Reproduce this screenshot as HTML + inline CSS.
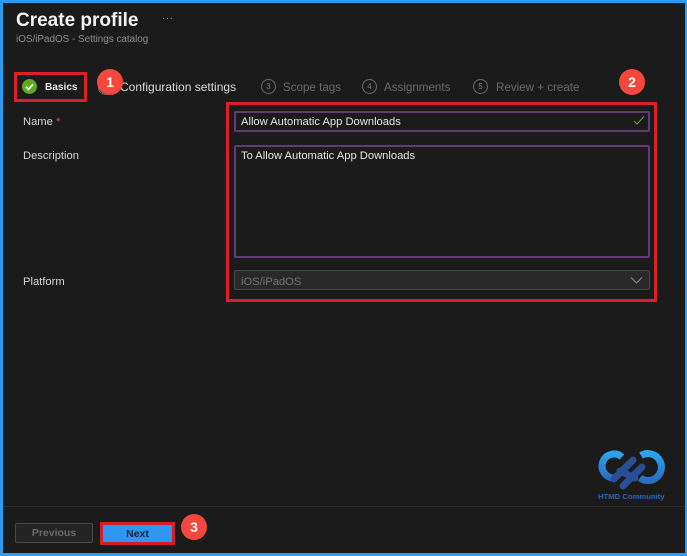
<!DOCTYPE html>
<html>
<head>
<meta charset="utf-8">
<style>
html,body{margin:0;padding:0;background:#1b1b1b}
body{width:687px;height:556px;position:relative;overflow:hidden;font-family:"Liberation Sans",sans-serif;color:#e6e6e6}
#w{position:absolute;left:0;top:0;width:687px;height:556px;filter:blur(.35px)}
.a{position:absolute;box-sizing:border-box;white-space:nowrap}
.t{font-size:11.2px;line-height:14px}
.s{font-size:11.6px;line-height:14px}
.dim{color:#696969}
.num{width:15px;height:15px;border:1px solid #6a6a6a;border-radius:50%;font-size:8px;line-height:13px;text-align:center;color:#7a7a7a}
.red{border:3px solid #dc1f29}
.inp{border:2px solid #623a76;border-radius:2px;background:#1b1b1b}
.badge{width:26px;height:26px;border-radius:50%;background:#f4483f;color:#fff;font-size:14px;font-weight:bold;line-height:26px;text-align:center}
</style>
</head>
<body>
<div id="w">
<div class="a" style="left:0;top:0;width:687px;height:556px;border:solid #2f9bf0;border-width:3px 2px 3px 3px"></div>

<div class="a" style="left:16px;top:8px;font-size:19px;line-height:26px;font-weight:bold;color:#f2f2f2">Create profile</div>
<div class="a" style="left:162px;top:12px;font-size:10px;line-height:14px;color:#9a9a9a;letter-spacing:.5px">···</div>
<div class="a" style="left:16px;top:33px;font-size:9.9px;line-height:14px;color:#8f8f8f">iOS/iPadOS - Settings catalog</div>

<div class="a red" style="left:14px;top:72px;width:73px;height:30px"></div>
<svg class="a" style="left:22px;top:79px" width="15" height="15" viewBox="0 0 15 15"><circle cx="7.5" cy="7.5" r="7.5" fill="#5fa81f"/><path d="M4 7.8l2.500 2.500L11 5.300" fill="none" stroke="#fff" stroke-width="1.800"/></svg>
<div class="a" style="left:45px;top:81px;font-size:10.1px;line-height:14px;font-weight:bold;color:#e8e8e8">Basics</div>

<div class="a num" style="left:98px;top:80px"></div>
<div class="a" style="left:120px;top:80px;font-size:12px;line-height:14px;color:#d8d8d8">Configuration settings</div>
<div class="a badge" style="left:97px;top:69px">1</div>

<div class="a num" style="left:261px;top:79px">3</div>
<div class="a dim s" style="left:283px;top:81px">Scope tags</div>
<div class="a num" style="left:362px;top:79px">4</div>
<div class="a dim s" style="left:384px;top:81px">Assignments</div>
<div class="a num" style="left:473px;top:79px">5</div>
<div class="a dim s" style="left:496px;top:81px">Review + create</div>
<div class="a badge" style="left:619px;top:69px">2</div>

<div class="a t" style="left:23px;top:115px;color:#d6d6d6">Name <span style="color:#d9534f">*</span></div>
<div class="a t" style="left:23px;top:149px;color:#d6d6d6">Description</div>
<div class="a t" style="left:23px;top:275px;color:#d6d6d6">Platform</div>

<div class="a red" style="left:226px;top:102px;width:431px;height:200px"></div>

<div class="a inp" style="left:234px;top:111px;width:416px;height:21px"></div>
<div class="a t" style="left:241px;top:115px;color:#e4e4e4">Allow Automatic App Downloads</div>
<svg class="a" style="left:633px;top:115px" width="12" height="11" viewBox="0 0 12 11"><path d="M1 6l3 3 7-7.500" fill="none" stroke="#6f9a45" stroke-width="1.100"/></svg>

<div class="a inp" style="left:234px;top:145px;width:416px;height:113px"></div>
<div class="a t" style="left:241px;top:149px;color:#e4e4e4">To Allow Automatic App Downloads</div>

<div class="a" style="left:234px;top:270px;width:416px;height:20px;background:#292929;border:1px solid #484848;border-radius:2px"></div>
<div class="a t" style="left:241px;top:275px;color:#757575">iOS/iPadOS</div>
<svg class="a" style="left:630px;top:276px" width="13" height="9" viewBox="0 0 13 9"><path d="M1 1.500l5.500 5.500L12 1.500" fill="none" stroke="#8a8a8a" stroke-width="1.100"/></svg>

<svg class="a" style="left:596px;top:448px" width="72" height="44" viewBox="0 0 72 44">
<defs><linearGradient id="g" x1="0" y1="0" x2="0" y2="1"><stop offset="0" stop-color="#2ba3ec"/><stop offset="1" stop-color="#2a6fc0"/></linearGradient></defs>
<path d="M26 9A12 12 0 1 0 18 30" fill="none" stroke="url(#g)" stroke-width="7"/>
<path d="M45 7.500A13.500 13.500 0 1 1 44 30" fill="none" stroke="url(#g)" stroke-width="7"/>
<path d="M18 31L37 12M27 38L46 19M24 23L39 30" fill="none" stroke="#2a4e96" stroke-width="7" stroke-linecap="round"/>
</svg>
<div class="a" style="left:598px;top:491px;font-size:7.700px;line-height:11px;font-weight:bold;color:#2568b8">HTMD Community</div>

<div class="a" style="left:3px;top:506px;width:682px;height:1px;background:#2a2a2a"></div>

<div class="a" style="left:15px;top:523px;width:78px;height:20px;border:1px solid #4a4a4a;border-radius:2px;background:#242424;text-align:center;font-size:10.500px;line-height:19px;font-weight:bold;color:#6a6a6a">Previous</div>
<div class="a" style="left:100px;top:522px;width:75px;height:23px;border:3px solid #d01f2a;background:#2f97f2;text-align:center;font-size:10.500px;line-height:18px;font-weight:bold;color:#10233a">Next</div>
<div class="a badge" style="left:181px;top:514px">3</div>
</div>
</body>
</html>
